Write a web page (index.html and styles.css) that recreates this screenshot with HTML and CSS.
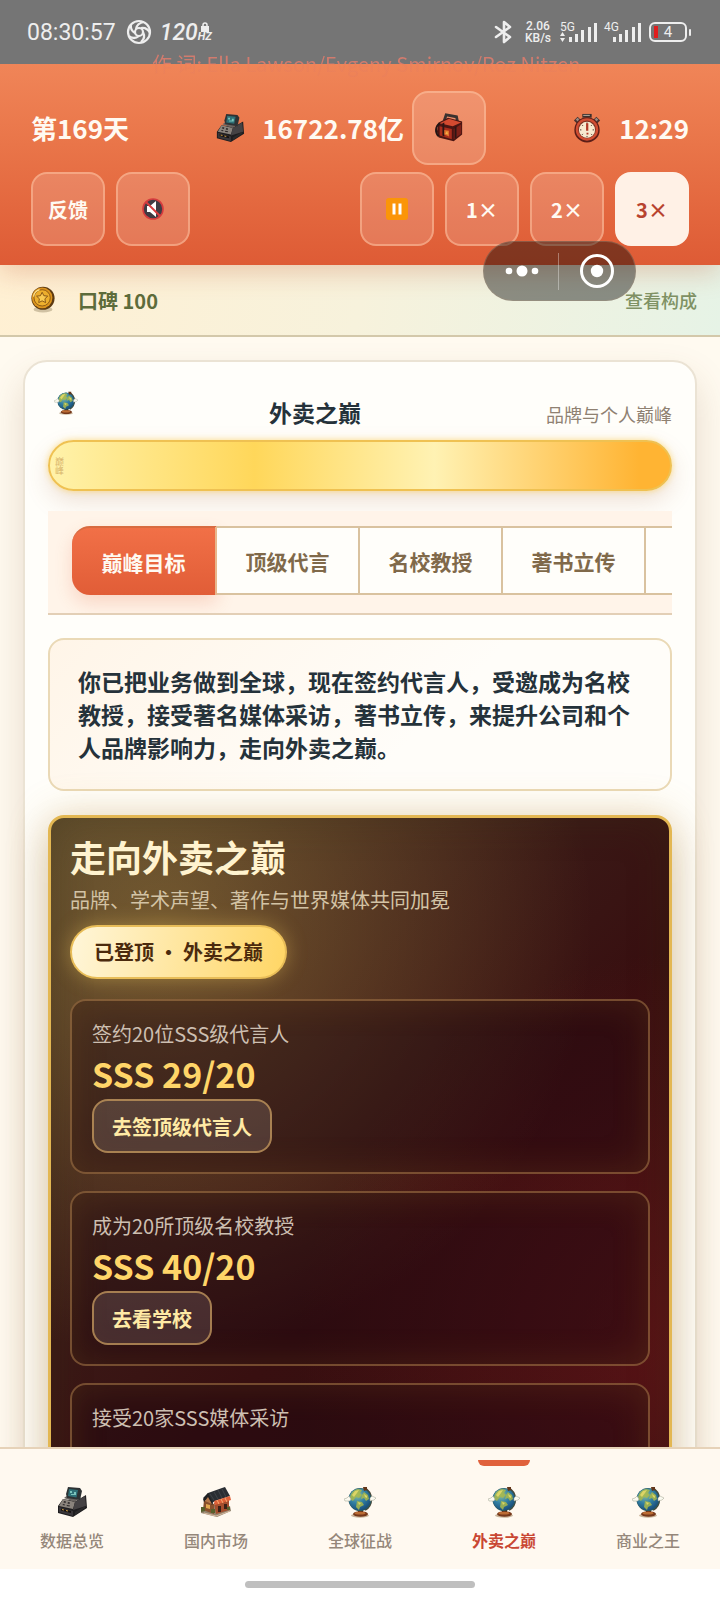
FILE: index.html
```html
<!DOCTYPE html>
<html lang="zh-CN">
<head>
<meta charset="utf-8">
<meta name="viewport" content="width=device-width, initial-scale=1">
<title>外卖之巅</title>
<link rel="stylesheet" href="styles.css">
</head>
<body>
<svg class="sprite" aria-hidden="true">
  <defs>
    <radialGradient id="sea" cx=".38" cy=".3" r=".75"><stop offset="0" stop-color="#8fbf9a"/><stop offset=".5" stop-color="#3381a4"/><stop offset="1" stop-color="#174a78"/></radialGradient>
    <symbol id="register" viewBox="0 0 32 32">
      <path d="M2 20 7 13 20 15 30 9 31 22 17 31 2 27Z" fill="#1e1d1f"/>
      <path d="M7 13 19 16 17 23 3 20Z" fill="#8a837c"/>
      <path d="M19 16 29 10 30 20 17 24Z" fill="#454244"/>
      <path d="M8 12 12 9 25 11 19 16Z" fill="#6a6460"/>
      <path d="M12 1 24 2 26 5 24 14 11 12 10 8Z" fill="#2e3234"/>
      <path d="M13 3 22 4 20.500 11.500 12 10Z" fill="#2f7077"/>
      <path d="M14 5h2v2h-2zM18 6h2v3h-2zM15 8h3v1h-3z" fill="#7cc5bd"/>
      <path d="M8 15l2 .5-.5 1.500-2-.5zM12 16l2 .5-.5 1.500-2-.5zM7 18l2 .5-.5 1-2-.5zM11 19l3 .5-.5 1-3-.5z" fill="#2c2829"/>
      <path d="M3 21 17 25v5L3 26Z" fill="#39363a"/>
      <path d="M5 22.500 15 25v2L5 24.500Z" fill="#14100f"/>
      <path d="M6 23l2 .5v1l-2-.5zM10 24l2 .5v1l-2-.5z" fill="#c99b45"/>
      <path d="M19 26 29 20v2l-10 7Z" fill="#2b2a2b"/>
    </symbol>
    <symbol id="bag" viewBox="0 0 32 32">
      <path d="M11 8 13 2 24 4 25 9" fill="none" stroke="#3a3230" stroke-width="3"/>
      <path d="M5 10 15 5 30 9 30 23 21 30 5 26 3 20Z" fill="#4a1512"/>
      <path d="M6 11 16 6 29 10 20 14Z" fill="#d34a30"/>
      <path d="M6 14 19 17 19 28 6 24Z" fill="#a82c1c"/>
      <path d="M21 17 29 12 29 22 21 28Z" fill="#7d2018"/>
      <path d="M9 11 11 10V25L9 24ZM22 15l2-1v12l-2 1z" fill="#2d1514"/>
      <path d="M11 18 16 19 16 25 11 23Z" fill="#df702b"/>
      <path d="M12 22l2-3 1 4z" fill="#f2b14a"/>
      <path d="M6 11C1 15 1 21 5 25" fill="none" stroke="#211514" stroke-width="2"/>
    </symbol>
    <symbol id="watch" viewBox="0 0 32 32">
      <path d="M2 8 6 4 9 7 5 11ZM30 8 26 4 23 7 27 11Z" fill="#493330"/>
      <path d="M4 7 6 5l2 2-2 2zM28 7l-2-2-2 2 2 2z" fill="#9c8b80"/>
      <path d="M11 1h10v4H11z" fill="#3d302e"/><path d="M12 2h7v1h-7z" fill="#c6b9ab"/>
      <circle cx="16" cy="18" r="13.500" fill="#5c1e17"/>
      <circle cx="16" cy="17.500" r="12" fill="#d14e33"/>
      <circle cx="16" cy="17.500" r="9.500" fill="#7d3324"/>
      <circle cx="16" cy="18" r="8.600" fill="#f8ead0"/>
      <path d="M16 10v1.500M16 24.500V26M8.500 18h1.500M22 18h1.500M10.700 12.700l1 1M21.300 12.700l-1 1M10.700 23.300l1-1M21.300 23.300l-1-1" stroke="#45322c"/>
      <path d="M15 11h2.400v8H15zM15.500 21h2v2h-2z" fill="#b13a29"/>
    </symbol>
    <symbol id="coin" viewBox="0 0 28 32">
      <ellipse cx="14" cy="27" rx="11" ry="3.500" fill="#8b7a58" opacity=".4"/>
      <circle cx="14" cy="14" r="13.500" fill="#5d3b12"/>
      <circle cx="13" cy="13.500" r="12" fill="#dc951e"/>
      <circle cx="13" cy="13.500" r="9.500" fill="#edb02e" stroke="#855313"/>
      <path d="M13 7l2 4 4.500.5-3.300 3.100.8 4.400-4-2-4 2 .8-4.400-3.300-3.100L11 11Z" fill="#f9cb53" stroke="#7b4b12"/>
      <path d="M3 12a10 10 0 0 1 7-8" fill="none" stroke="#ffe68e" stroke-width="1.500"/>
    </symbol>
    <symbol id="globe" viewBox="0 0 32 32">
      <ellipse cx="16" cy="29.500" rx="9" ry="2.200" fill="#c8b49a"/>
      <path d="M20 2a12.500 12.500 0 0 1 1 22" fill="none" stroke="#4a4433" stroke-width="2"/>
      <path d="M14 24h5v3h-5z" fill="#3f210f"/>
      <ellipse cx="16.500" cy="28" rx="7.500" ry="2.800" fill="#76381a"/>
      <ellipse cx="16" cy="27.200" rx="5.500" ry="1.400" fill="#bc6c34"/>
      <circle cx="16" cy="13.500" r="11.500" fill="#2a5a5e"/>
      <circle cx="15.700" cy="13.300" r="10.900" fill="url(#sea)"/>
      <path d="M6 11Q8 4 14 3L18 4 16 7 18 9 15 12 12 11 9 15 7 14ZM20 6l4 3 1 4-3 2-2-3-3 1 1-4zM13 15l5 1 2 3-4 2-1 3-3-3z" fill="#a9b94a" opacity=".85"/>
      <path d="M8 9l3-4 4-1-2 3-3 4zM20 8l3 2v2l-2-1zM14 16l3 1-2 2z" fill="#ddd566"/>
      <path d="M19 1h4v3l-3 1z" fill="#633619"/>
      <path d="M0 13l3-1 2-2 2 3-1 2H1zM26 12l2-2 2 1 2 1-2 2-4 1z" fill="#fbfaf0" stroke="#9ca08f" stroke-width=".5"/>
    </symbol>
    <symbol id="shop" viewBox="0 0 32 32">
      <path d="M1 23 8 18 30 20 31 25 17 31 1 27Z" fill="#92836e"/>
      <path d="M4 14 14 18 14 28 3 24Z" fill="#88502d"/>
      <path d="M14 17 29 11 29 24 16 28Z" fill="#a54e2d"/>
      <path d="M3 12 8 7 22 2 25 1 30 10 15 15 12 17Z" fill="#2a2e33"/>
      <path d="M10 8l4 6M14 6l4 7M18 4l4 8M22 3l4 8" stroke="#474d52" stroke-width=".7"/>
      <path d="M3 13 8 7 13 17 12 19 8 12 4 16Z" fill="#1f2022"/>
      <path d="M5 15 8 11 12 18Z" fill="#b4774a"/>
      <path d="M14 15 30 10 31 14 15 19Z" fill="#df6038"/>
      <path d="M17 14l2 4M21 13l2 4M25 12l2 4" stroke="#f5ab72"/>
      <path d="M18 20h3v6h-3zM24 18h3v5h-3z" fill="#3a2117"/>
      <path d="M6 18l4 1v4l-4-1z" fill="#e2a850"/>
      <path d="M1 21h4v4l-4 1zM11 23h4v4h-4zM27 21h3v3h-3z" fill="#57602c"/>
      <path d="M4 27 16 30 30 25" fill="none" stroke="#d9baa0"/>
    </symbol>
  </defs>
</svg>

<div class="app">
  <div class="status">
    <span class="clock">08:30:57</span>
    <svg class="shutter" viewBox="0 0 26 26" aria-hidden="true"><g fill="none" stroke="#eee" stroke-width="2.200"><circle cx="13" cy="13" r="11"/><circle cx="13" cy="13" r="4"/><path d="M10 10Q11 4 18 3M15 9q6-1 9 5M17 13q3 6-2 10M13 17q-5 4-10 0M9 14Q4 11 5 6"/></g></svg>
    <span class="rate">120</span>
    <span class="hz"><svg viewBox="0 0 8 10" aria-hidden="true"><path d="M0 4h8v6H0z" fill="#eee"/><path d="M2 5V3a2 2 0 0 1 4 0v2" fill="none" stroke="#eee" stroke-width="1.500"/></svg>HZ</span>
    <svg class="bluetooth" viewBox="0 0 20 24" aria-hidden="true"><path d="M2 7l14 10-6 5V2l6 5L2 17" fill="none" stroke="#eee" stroke-width="2.600" stroke-linejoin="round" stroke-linecap="round"/></svg>
    <span class="net">2.06<br>KB/s</span>
    <span class="signal"><span>5G</span><svg viewBox="0 0 38 20" aria-hidden="true"><path d="M0 13l2.500-4L5 13zM0 15l2.500 4L5 15zM9 14h3v5H9zM15 11h3v8h-3zM21 7h3v12h-3zM28 4h3v15h-3zM34 0h3v19h-3z" fill="#eee"/></svg></span>
    <span class="signal"><span>4G</span><svg viewBox="0 0 38 20" aria-hidden="true"><path d="M9 14h3v5H9zM15 11h3v8h-3zM21 7h3v12h-3zM28 4h3v15h-3zM34 0h3v19h-3z" fill="#eee"/></svg></span>
    <span class="battery">4</span>
    <span class="lyric">作 词: Ella Lawson/Evgeny Smirnov/Roz Nitzen</span>
  </div>

  <header class="top">
    <div class="row">
      <span class="stat">第169天</span>
      <div class="money">
        <svg class="icon30" aria-hidden="true"><use href="#register"/></svg>
        <span class="stat">16722.78亿</span>
        <button class="key" aria-label="背包"><svg class="icon30" aria-hidden="true"><use href="#bag"/></svg></button>
      </div>
      <div class="time">
        <svg class="icon30" aria-hidden="true"><use href="#watch"/></svg>
        <span class="stat">12:29</span>
      </div>
    </div>
    <div class="row">
      <div class="keys">
        <button class="key">反馈</button>
        <button class="key" aria-label="静音"><svg class="icon22" viewBox="0 0 22 22" aria-hidden="true"><circle cx="11" cy="11" r="10" fill="#403b43" stroke="#d63b3e" stroke-width="1.600"/><path d="M5 8h3l6-5v16l-6-5H5z" fill="#fff"/><path d="M4 4l14 14" stroke="#d63b3e" stroke-width="2"/></svg></button>
      </div>
      <div class="keys">
        <button class="key" aria-label="暂停"><svg class="icon22" viewBox="0 0 22 22" aria-hidden="true"><rect width="22" height="22" rx="3" fill="#fb9508"/><path d="M6.500 5.500h3v11h-3zM12.500 5.500h3v11h-3z" fill="#fff"/></svg></button>
        <button class="key">1×</button>
        <button class="key">2×</button>
        <button class="key key-on">3×</button>
      </div>
    </div>
    <div class="capsule">
      <button aria-label="更多"><svg width="34" height="14" viewBox="0 0 34 14" aria-hidden="true"><g fill="#fff"><circle cx="4" cy="7" r="3.300"/><circle cx="17" cy="7" r="5.500"/><circle cx="30" cy="7" r="3.300"/></g></svg></button>
      <button aria-label="关闭"><svg width="34" height="34" viewBox="0 0 34 34" aria-hidden="true"><circle cx="17" cy="17" r="15.500" fill="none" stroke="#fff" stroke-width="3"/><circle cx="17" cy="17" r="6.200" fill="#fff"/></svg></button>
    </div>
  </header>

  <div class="fame">
    <svg class="coin" aria-hidden="true"><use href="#coin"/></svg>
    <span class="fame-value">口碑 100</span>
    <a class="fame-link" href="#fame">查看构成</a>
  </div>

  <main class="content">
    <section class="panel">
      <div class="panel-head">
        <span class="panel-icon"><svg aria-hidden="true"><use href="#globe"/></svg></span>
        <h1>外卖之巅</h1>
        <span class="hint">品牌与个人巅峰</span>
      </div>
      <div class="meter"><span>巅峰</span></div>
      <nav class="tabs">
        <button class="tab tab-on">巅峰目标</button>
        <button class="tab">顶级代言</button>
        <button class="tab">名校教授</button>
        <button class="tab">著书立传</button>
        <span class="tab" aria-hidden="true"></span>
      </nav>
      <p class="intro">你已把业务做到全球，现在签约代言人，受邀成为名校教授，接受著名媒体采访，著书立传，来提升公司和个人品牌影响力，走向外卖之巅。</p>
      <section class="summit">
        <h2>走向外卖之巅</h2>
        <p class="sub">品牌、学术声望、著作与世界媒体共同加冕</p>
        <span class="badge">已登顶 · 外卖之巅</span>
        <article class="goal"><p>签约20位SSS级代言人</p><strong>SSS 29/20</strong><button>去签顶级代言人</button></article>
        <article class="goal"><p>成为20所顶级名校教授</p><strong>SSS 40/20</strong><button>去看学校</button></article>
        <article class="goal"><p>接受20家SSS媒体采访</p></article>
      </section>
    </section>
  </main>

  <nav class="dock">
    <button><svg class="icon32" aria-hidden="true"><use href="#register"/></svg>数据总览</button>
    <button><svg class="icon32" aria-hidden="true"><use href="#shop"/></svg>国内市场</button>
    <button><svg class="icon32" aria-hidden="true"><use href="#globe"/></svg>全球征战</button>
    <button class="here"><svg class="icon32" aria-hidden="true"><use href="#globe"/></svg>外卖之巅</button>
    <button><svg class="icon32" aria-hidden="true"><use href="#globe"/></svg>商业之王</button>
  </nav>
  <div class="home"><span></span></div>
</div>
</body>
</html>
```
FILE: styles.css
```css
* { box-sizing: border-box; }
body {
  margin: 0;
  font-family: "Noto Sans CJK SC", "Noto Sans", sans-serif;
  color: #25323a;
  background: #fff;
}
h1, h2, p { margin: 0; }
button { margin: 0; padding: 0; border: 0; background: none; font: inherit; color: inherit; }
svg { display: block; flex: none; }
.sprite { position: absolute; width: 0; height: 0; }
.icon22 { width: 22px; height: 22px; }
.icon30 { width: 30px; height: 30px; }
.icon32 { width: 32px; height: 32px; }
.app { display: flex; flex-direction: column; height: 100vh; overflow: hidden; }

/* system status bar */
.status {
  position: relative;
  z-index: 4;
  flex: none;
  display: flex;
  align-items: center;
  height: 64px;
  padding: 0 28px 0 27px;
  background: #757575;
  color: #eee;
  font-family: Roboto, sans-serif;
}
.clock { font-size: 23px; }
.shutter { width: 26px; height: 26px; margin-left: 10px; }
.rate { margin-left: 8px; font-size: 23px; font-style: italic; font-weight: 500; }
.hz { display: flex; flex-direction: column; align-items: center; font-size: 11px; line-height: 10px; font-weight: 700; font-style: italic; }
.hz svg { width: 8px; height: 10px; }
.bluetooth { width: 20px; height: 24px; margin-left: auto; }
.net { margin-left: 10px; width: 28px; font-size: 12px; line-height: 12px; font-weight: 500; text-align: center; }
.signal { position: relative; width: 38px; height: 22px; margin-left: 6px; display: flex; align-items: flex-end; }
.signal svg { width: 38px; height: 20px; }
.signal span { position: absolute; top: 0; left: 0; font-size: 12px; line-height: 12px; }
.net + .signal { margin-left: 8px; }
.battery {
  position: relative;
  width: 38px;
  height: 20px;
  margin-left: 7px;
  margin-right: 5px;
  border: 2px solid #eee;
  border-radius: 6px;
  font-size: 15px;
  line-height: 16px;
  text-align: center;
  background: linear-gradient(#e01e1e, #e01e1e) 3px center / 4px 12px no-repeat;
}
.battery::after { content: ""; position: absolute; right: -6px; top: 5px; width: 2px; height: 7px; background: #eee; border-radius: 2px; }
.lyric {
  position: absolute;
  left: 152px;
  top: 50px;
  background: linear-gradient(rgba(233, 125, 108, .8) 14px, rgba(225, 122, 100, .25) 14px);
  background-clip: text;
  -webkit-background-clip: text;
  color: transparent;
  font: 20px/28px "Noto Sans CJK SC", sans-serif;
  white-space: nowrap;
}

/* game header */
.top {
  position: relative;
  z-index: 3;
  flex: none;
  display: flex;
  flex-direction: column;
  gap: 7px;
  padding: 27px 31px 19px;
  background: linear-gradient(#f08558, #e97549 40%, #de5b35);
  box-shadow: 0 8px 24px rgba(190, 80, 40, .25);
  color: #fffaf2;
}
.row, .money, .time, .keys { display: flex; align-items: center; }
.row { justify-content: space-between; }
.stat { font-size: 26px; line-height: 36px; font-weight: 700; }
.money .stat { margin: 0 8px 0 17px; }
.time { gap: 17px; }
.keys { gap: 11px; }
.key {
  display: flex;
  align-items: center;
  justify-content: center;
  width: 74px;
  height: 74px;
  border: 2px solid rgba(255, 200, 165, .5);
  border-radius: 16px;
  background: rgba(255, 255, 255, .16);
  font-size: 20px;
  font-weight: 700;
}
.key-on { background: #fff1e6; border-color: #fff1e6; color: #b8432f; }
.capsule {
  position: absolute;
  right: 84px;
  bottom: -36px;
  display: flex;
  width: 153px;
  height: 60px;
  border: 1px solid rgba(160, 140, 120, .4);
  border-radius: 30px;
  background: rgba(0, 0, 0, .42);
}
.capsule button { flex: 1; display: flex; align-items: center; justify-content: center; }
.capsule::before { content: ""; position: absolute; left: 49%; top: 11px; bottom: 10px; width: 1px; background: rgba(255, 255, 255, .35); }

.fame {
  flex: none;
  display: flex;
  align-items: center;
  height: 72px;
  padding: 0 23px 0 31px;
  border-bottom: 2px solid #d3c8aa;
  background: linear-gradient(100deg, #fff0d3, #f7f2dc 50%, #e6f3e6);
  color: #5d6c3b;
}
.coin { width: 24px; height: 28px; margin-right: 23px; }
.fame-value { font-size: 20px; font-weight: 700; }
.fame-link { margin-left: auto; color: #7f9264; font-size: 18px; font-weight: 500; text-decoration: none; }

.content { flex: 1; min-height: 0; overflow: hidden; padding: 23px; background: #fffaf0; }
.panel {
  padding: 24px 23px;
  border: 2px solid #ebe3d4;
  border-radius: 24px;
  background: #fffefa;
  box-shadow: 0 18px 36px rgba(120, 80, 40, .18);
}
.panel-head { display: flex; justify-content: space-between; align-items: flex-start; height: 54px; }
.panel-icon { width: 36px; padding: 5px 6px; }
.panel-icon svg { width: 24px; height: 24px; }
h1 { padding-top: 10px; font-size: 23px; line-height: 33px; font-weight: 700; }
.hint { padding-top: 15px; font-size: 18px; line-height: 26px; font-weight: 400; color: #8f8172; }
.meter {
  display: flex;
  align-items: center;
  height: 51px;
  padding-left: 4px;
  border: 2px solid #efc152;
  border-radius: 26px;
  background: linear-gradient(90deg, #fff2aa, #ffd75a 33%, #fff2b3 62%, #ffb433 95%);
  box-shadow: 0 0 6px rgba(255, 205, 70, .6), 0 10px 24px rgba(160, 90, 50, .18);
}
.meter span { writing-mode: vertical-rl; font-size: 9px; line-height: 10px; color: #d9b56c; }
.tabs {
  display: flex;
  margin-top: 20px;
  padding: 15px 0 18px 24px;
  overflow: hidden;
  border-bottom: 2px solid #e3cfb6;
  background: #fff4e9;
}
.tab {
  flex: none;
  width: 143px;
  height: 69px;
  border: 2px solid #d9c29f;
  border-left-width: 0;
  background: #fffefa;
  color: #80694a;
  font-size: 21px;
  font-weight: 700;
}
.tab-on {
  width: 145px;
  border-color: #d86b40 #e8b78c #e15d37;
  border-bottom-width: 0;
  border-radius: 18px 0 0 18px;
  background: linear-gradient(#f17047, #e15d37);
  box-shadow: 0 8px 18px rgba(225, 93, 55, .2);
  color: #fffaf2;
}
.intro {
  margin-top: 23px;
  padding: 25px 28px;
  border: 2px solid #ead9b6;
  border-radius: 16px;
  background: linear-gradient(135deg, #fff5e8, #fffdf9 60%);
  font-size: 23px;
  line-height: 33px;
  font-weight: 700;
}

.summit {
  display: flex;
  flex-direction: column;
  align-items: flex-start;
  margin-top: 24px;
  padding: 13px 19px 24px;
  border: 3px solid #e3b752;
  border-radius: 16px;
  background:
    radial-gradient(circle at 18% 14%, rgba(255, 215, 90, .28), transparent 52%),
    radial-gradient(circle at 105% 70%, rgba(160, 30, 35, .36), transparent 48%),
    linear-gradient(135deg, #3f3024, #380f10 55%, #2f0c0e);
  box-shadow: 0 0 40px rgba(205, 155, 60, .3), 0 18px 40px rgba(80, 40, 10, .2), inset 0 0 40px rgba(60, 50, 20, .3);
}
h2 { font-size: 36px; line-height: 50px; font-weight: 700; color: #fff3cf; }
.sub { margin-top: 5px; font-size: 20px; line-height: 28px; font-weight: 400; color: #d3c3a5; }
.badge {
  margin-top: 11px;
  padding: 0 22px;
  border: 2px solid #e8bd58;
  border-radius: 28px;
  background: linear-gradient(100deg, #fff6d9, #ffd665);
  box-shadow: 0 0 20px rgba(255, 215, 100, .35);
  color: #4b2a0d;
  font-size: 20px;
  line-height: 50px;
  font-weight: 700;
}
.goal {
  width: 100%;
  min-height: 175px;
  margin-top: 17px;
  padding: 18px 20px;
  border: 2px solid rgba(190, 140, 80, .5);
  border-radius: 16px;
  background: rgba(28, 8, 16, .42);
  box-shadow: inset 0 0 36px rgba(160, 110, 30, .2);
}
.badge + .goal { margin-top: 20px; }
.goal p { font-size: 20px; line-height: 30px; font-weight: 400; color: #cdbfb1; }
.goal strong { display: block; font-size: 34px; line-height: 50px; font-weight: 700; color: #ffd568; }
.goal button {
  height: 54px;
  padding: 0 18px;
  border: 2px solid rgba(205, 160, 95, .7);
  border-radius: 16px;
  background: rgba(255, 255, 255, .12);
  color: #ffeaa5;
  font-size: 20px;
  font-weight: 700;
}

/* bottom navigation */
.dock {
  position: relative;
  z-index: 2;
  flex: none;
  display: grid;
  grid-template-columns: repeat(5, 1fr);
  height: 122px;
  padding-top: 11px;
  border-top: 2px solid #e6d2b8;
  background: #fff9f0;
}
.dock button {
  position: relative;
  display: flex;
  flex-direction: column;
  align-items: center;
  gap: 10px;
  padding-top: 26px;
  font-size: 16px;
  line-height: 24px;
  font-weight: 500;
  color: #95877a;
}
.dock .here { color: #c94733; font-weight: 700; }
.here::before { content: ""; position: absolute; top: 0; left: 50%; width: 52px; height: 6px; margin-left: -26px; border-radius: 0 0 6px 6px; background: #e0613c; }
.home { flex: none; display: flex; justify-content: center; height: 31px; padding-top: 12px; background: #fff; }
.home span { width: 32%; height: 7px; border-radius: 4px; background: #bfbfbf; }
```
